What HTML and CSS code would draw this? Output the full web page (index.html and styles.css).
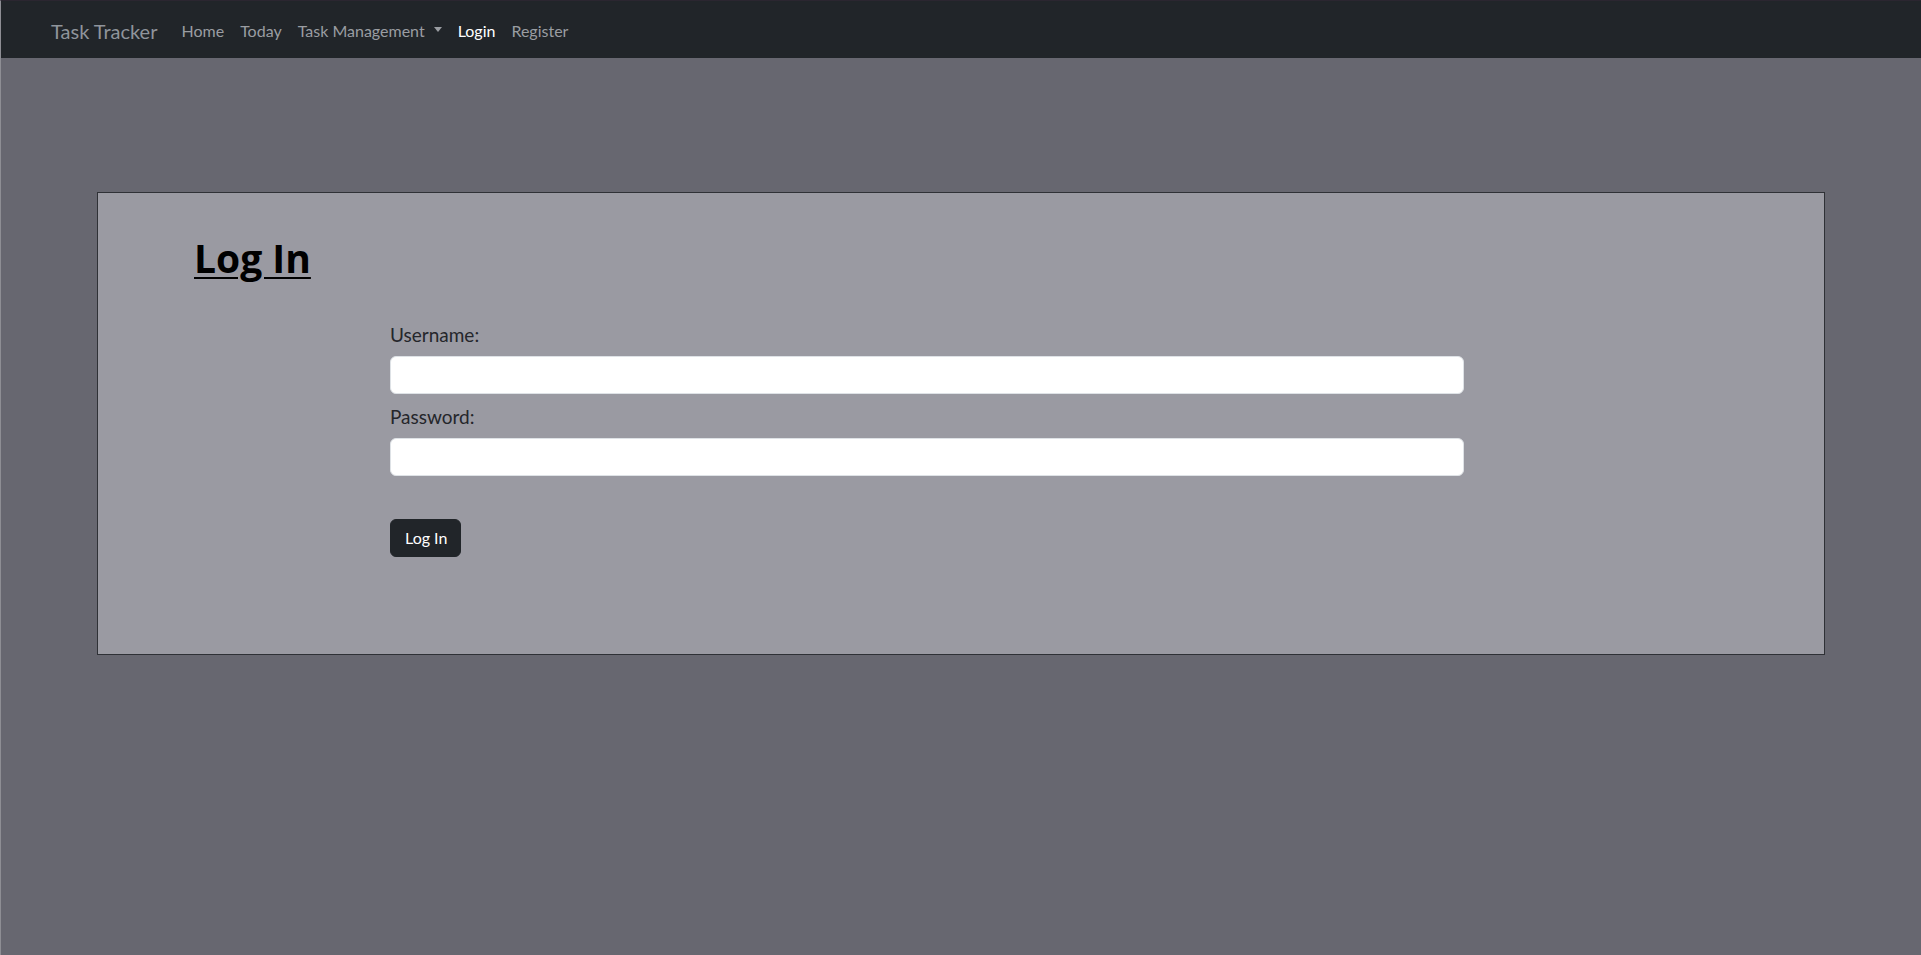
FILE: index.html
```html
<!DOCTYPE html>
<html lang="en">
<head>
<meta charset="utf-8">
<title>Log In - Task Tracker</title>
<link rel="stylesheet" href="styles.css">
</head>
<body>
<nav class="navbar">
  <a class="brand" href="#">Task Tracker</a>
  <ul class="nav-links">
    <li><a class="nav-link" href="#">Home</a></li>
    <li><a class="nav-link" href="#">Today</a></li>
    <li><a class="nav-link dropdown" href="#">Task Management<span class="caret"></span></a></li>
    <li><a class="nav-link active" href="#">Login</a></li>
    <li><a class="nav-link" href="#">Register</a></li>
  </ul>
</nav>
<main class="page">
  <section class="card">
    <h1 class="title">Log In</h1>
    <form class="login-form">
      <label class="form-label" for="username">Username:</label>
      <input class="form-control" id="username" type="text">
      <label class="form-label" for="password">Password:</label>
      <input class="form-control" id="password" type="password">
      <button class="btn" type="submit">Log In</button>
    </form>
  </section>
</main>
</body>
</html>
```
FILE: styles.css
```css
* { box-sizing: border-box; }
html, body { margin: 0; padding: 0; }
body {
  background: #676770;
  font-family: "Segoe UI", Lato, "Liberation Sans", sans-serif;
  font-size: 16px;
  line-height: 1.5;
  color: #212529;
  min-height: 955px;
  border-top: 1px solid #2b2630;
  border-left: 1px solid #8e8e94;
}
.navbar {
  display: flex;
  align-items: center;
  height: 57px;
  background: #212529;
  padding: 3px 0 0 50px;
}
.brand {
  font-size: 20px;
  color: #8f949b;
  text-decoration: none;
  margin-right: 16px;
  line-height: 30px;
}
.nav-links {
  display: flex;
  list-style: none;
  margin: 0;
  padding: 0;
}
.nav-link {
  display: flex;
  align-items: center;
  padding: 8px 8px;
  color: #9a9da2;
  text-decoration: none;
  line-height: 24px;
}
.nav-link.active { color: #ffffff; }
.caret {
  display: inline-block;
  margin-left: 9px;
  width: 0;
  height: 0;
  border-top: 5px solid #9a9da2;
  border-left: 4px solid transparent;
  border-right: 4px solid transparent;
  margin-top: -3px;
}
.page {
  padding-top: 134px;
}
.card {
  margin: 0 96px 0 96px;
  background: #9a9aa2;
  border: 1px solid #2f3136;
  padding: 41px 94px 97px 96px;
}
.title {
  margin: 0;
  font-family: "Open Sans", "Segoe UI", sans-serif;
  font-size: 39px;
  font-weight: 700;
  line-height: 48px;
  color: #000;
  text-decoration: underline;
  text-decoration-thickness: 2px;
  text-underline-offset: 4px;
}
.login-form {
  display: flex;
  flex-direction: column;
  align-items: flex-start;
  margin: 38px 0 0 196px;
  width: 1074px;
}
.form-label {
  font-size: 19px;
  line-height: 30px;
  margin-bottom: 6px;
  color: #25262b;
}
.form-control {
  width: 100%;
  height: 38px;
  border: 1px solid #dee2e6;
  border-radius: 6px;
  background: #fff;
  padding: 6px 12px;
  font: inherit;
  margin-bottom: 8px;
}
.btn {
  margin-top: 35px;
  height: 38px;
  padding: 6px 13px 6px 14px;
  background: #212529;
  color: #fff;
  border: 1px solid #212529;
  border-radius: 6px;
  font: inherit;
  font-size: 16px;
  line-height: 24px;
}
```
